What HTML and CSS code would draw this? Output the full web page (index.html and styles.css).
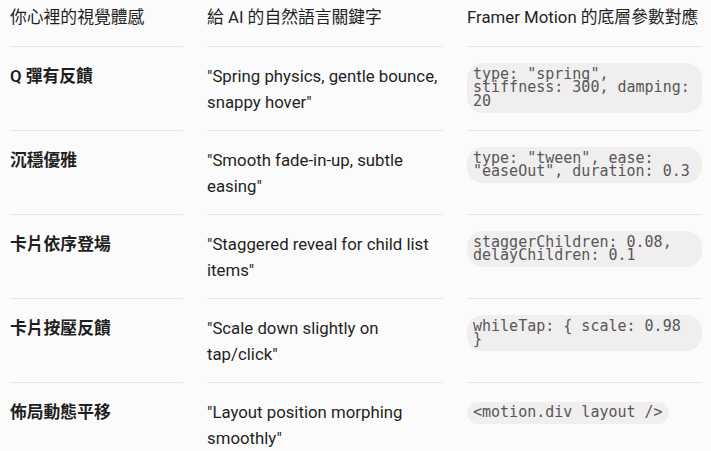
FILE: index.html
```html
<!DOCTYPE html>
<html lang="zh-Hant">
<head>
  <meta charset="UTF-8">
  <meta name="viewport" content="width=device-width, initial-scale=1.0">
  <title>動態效果關鍵字對照</title>
  <link rel="stylesheet" href="styles.css">
</head>
<body>
  <div class="table">
    <div class="cell head">你心裡的視覺體感</div>
    <div class="cell head">給 AI 的自然語言關鍵字</div>
    <div class="cell head">Framer Motion 的底層參數對應</div>

    <div class="cell feel">Q 彈有反饋</div>
    <div class="cell">"Spring physics, gentle bounce, snappy hover"</div>
    <div class="cell"><code>type: "spring", stiffness: 300, damping: 20</code></div>

    <div class="cell feel">沉穩優雅</div>
    <div class="cell">"Smooth fade-in-up, subtle easing"</div>
    <div class="cell"><code>type: "tween", ease: "easeOut", duration: 0.3</code></div>

    <div class="cell feel">卡片依序登場</div>
    <div class="cell">"Staggered reveal for child list items"</div>
    <div class="cell"><code>staggerChildren: 0.08, delayChildren: 0.1</code></div>

    <div class="cell feel">卡片按壓反饋</div>
    <div class="cell">"Scale down slightly on tap/click"</div>
    <div class="cell"><code>whileTap: { scale: 0.98 }</code></div>

    <div class="cell feel">佈局動態平移</div>
    <div class="cell">"Layout position morphing smoothly"</div>
    <div class="cell"><code>&lt;motion.div layout /&gt;</code></div>
  </div>
</body>
</html>
```

FILE: styles.css
```css
body {
  margin: 0;
  background-color: #fbfbfb;
  color: #1f1f1f;
  font-family: Roboto, "Noto Sans CJK TC", sans-serif;
  font-size: 16.8px;
  line-height: 26px;
}

.table {
  display: grid;
  grid-template-columns: 173px 236px 235px;
  column-gap: 24px;
  padding: 0 9px 0 10px;
}

.cell {
  height: 52px;
  padding: 16px 0 15px;
  border-bottom: 1px solid #e6e6e6;
}

.cell:nth-last-child(-n+3) {
  border-bottom: none;
}

.head {
  height: 26px;
  padding-top: 4px;
  padding-bottom: 16px;
}

.feel {
  font-weight: 600;
}

code {
  display: inline-block;
  padding: 4.5px 6px;
  border-radius: 16px;
  background-color: #f0eeef;
  color: #575757;
  font-family: "DejaVu Sans Mono", monospace;
  font-size: 15px;
  line-height: 13.5px;
  vertical-align: 1px;
}
```
